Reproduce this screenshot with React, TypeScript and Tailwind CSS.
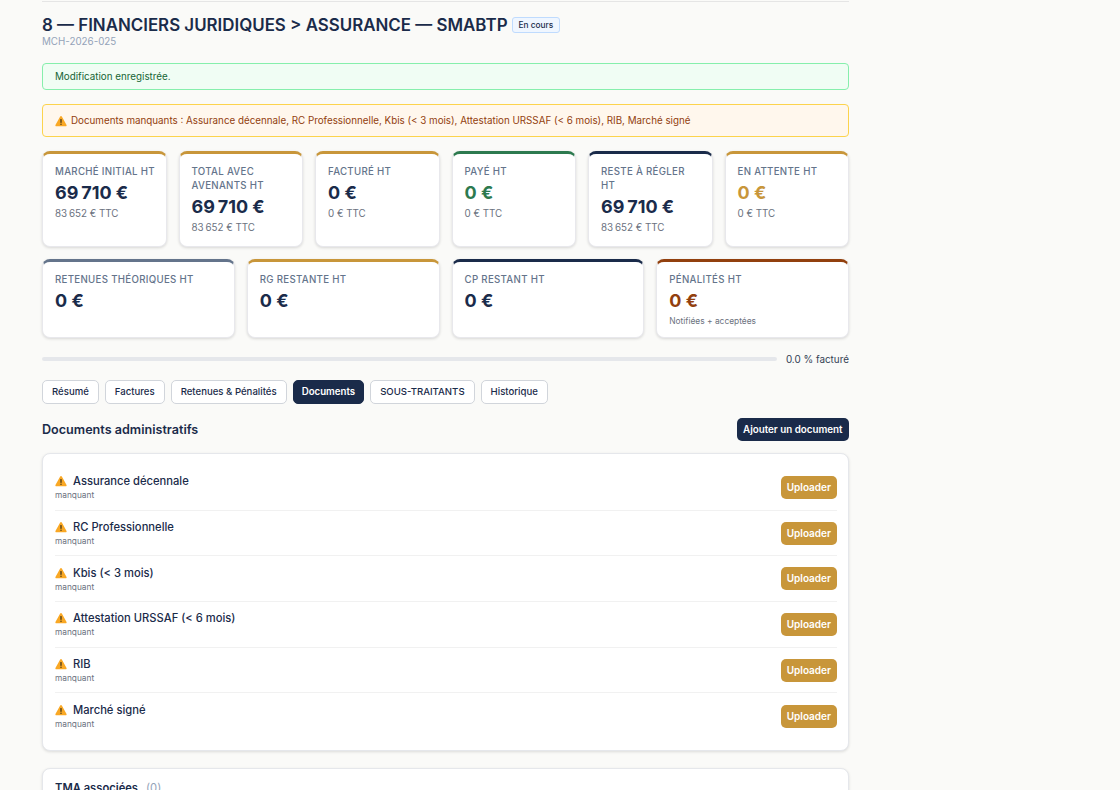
const WarnIcon = ({ size = 12 }: { size?: number }) => (
  <svg width={size} height={size} viewBox="0 0 16 16" className="shrink-0">
    <path d="M8 1.2c.5 0 .9.3 1.1.7l6.3 11.4c.4.8-.1 1.7-1 1.7H1.6c-.9 0-1.4-.9-1-1.7L6.9 1.9c.2-.4.6-.7 1.1-.7z" fill="#f9a825" />
    <rect x="7.1" y="5.2" width="1.8" height="5.4" rx="0.8" fill="#4a3a1a" />
    <circle cx="8" cy="12.4" r="1" fill="#4a3a1a" />
  </svg>
);

interface Kpi {
  label: string;
  value: string;
  sub?: string;
  bar: string;
  color: string;
}

const topKpis: Kpi[] = [
  { label: "Marché initial HT", value: "69\u202f710 €", sub: "83\u202f652 € TTC", bar: "border-t-[#c8963a]", color: "text-[#1a2b4a]" },
  { label: "Total avec avenants HT", value: "69\u202f710 €", sub: "83\u202f652 € TTC", bar: "border-t-[#c8963a]", color: "text-[#1a2b4a]" },
  { label: "Facturé HT", value: "0 €", sub: "0 € TTC", bar: "border-t-[#c8963a]", color: "text-[#1a2b4a]" },
  { label: "Payé HT", value: "0 €", sub: "0 € TTC", bar: "border-t-[#2d7a4f]", color: "text-[#2d7a4f]" },
  { label: "Reste à régler HT", value: "69\u202f710 €", sub: "83\u202f652 € TTC", bar: "border-t-[#1a2b4a]", color: "text-[#1a2b4a]" },
  { label: "En attente HT", value: "0 €", sub: "0 € TTC", bar: "border-t-[#c8963a]", color: "text-[#c8963a]" },
];

const bottomKpis: Kpi[] = [
  { label: "Retenues théoriques HT", value: "0 €", bar: "border-t-[#64748b]", color: "text-[#1a2b4a]" },
  { label: "RG restante HT", value: "0 €", bar: "border-t-[#c8963a]", color: "text-[#1a2b4a]" },
  { label: "CP restant HT", value: "0 €", bar: "border-t-[#1a2b4a]", color: "text-[#1a2b4a]" },
  { label: "Pénalités HT", value: "0 €", sub: "Notifiées + acceptées", bar: "border-t-[#92400e]", color: "text-[#92400e]" },
];

const tabs = ["Résumé", "Factures", "Retenues & Pénalités", "Documents", "SOUS-TRAITANTS", "Historique"];

const docs = [
  "Assurance décennale",
  "RC Professionnelle",
  "Kbis (< 3 mois)",
  "Attestation URSSAF (< 6 mois)",
  "RIB",
  "Marché signé",
];

const KpiCard = ({ kpi, small }: { kpi: Kpi; small?: boolean }) => (
  <div className={`bg-white rounded-lg border border-[#e8e8ec] border-t-[3px] ${kpi.bar} shadow-[0_1px_3px_rgba(0,0,0,0.14)] pl-3 pr-[10px] pt-[11px]`}>
    <div className="text-[9.7px] leading-[14px] uppercase tracking-[0.3px] font-medium text-[#64748b]">{kpi.label}</div>
    <div className={`text-[18px] leading-[21px] mt-[3px] font-bold ${kpi.color}`}>{kpi.value}</div>
    {kpi.sub && (
      <div className={`${small ? "text-[8.4px] mt-[3px]" : "text-[9.8px] mt-[4px]"} leading-[14px] text-[#6b7280]`}>{kpi.sub}</div>
    )}
  </div>
);

export default function App() {
  return (
    <div className="h-[790px] overflow-hidden bg-[#fafaf8] pl-[42px] pr-[271px] font-['Inter',sans-serif] text-[#1a2b4a]">
      <div className="border-t border-[#e5e5e5] mt-px pt-[13px]">
        <div className="flex items-center gap-[4px]">
          <h1 className="text-[16.9px] leading-[20px] font-semibold">8 — FINANCIERS JURIDIQUES &gt; ASSURANCE — SMABTP</h1>
          <span className="text-[8.3px] leading-[12px] font-medium px-[6px] py-[1px] rounded-[3px] bg-[#eff6ff] border border-[#bfdbfe]">En cours</span>
        </div>
        <div className="text-[9.8px] leading-[14px] text-[#94a3b8]">MCH-2026-025</div>

        <div className="mt-[14px] h-[27px] flex items-center px-3 pt-px rounded-[4px] bg-[#f0fdf4] border border-[#86efac] text-[9.8px] text-[#166534]">
          Modification enregistrée.
        </div>

        <div className="mt-[14px] h-[33px] flex items-center gap-[4px] px-3 rounded-[4px] bg-[#fff7ed] border border-[#fcd34d] text-[9.8px] text-[#92400e]">
          <WarnIcon size={12} />
          <span className="pt-[2px]">
            Documents manquants : Assurance décennale, RC Professionnelle, Kbis (&lt; 3 mois), Attestation URSSAF (&lt; 6 mois), RIB, Marché signé
          </span>
        </div>

        <div className="mt-[14px] grid grid-cols-6 gap-3 h-[96px]">
          {topKpis.map((k) => (
            <KpiCard key={k.label} kpi={k} />
          ))}
        </div>

        <div className="mt-3 grid grid-cols-4 gap-3 h-[79px]">
          {bottomKpis.map((k) => (
            <KpiCard key={k.label} kpi={k} small />
          ))}
        </div>

        <div className="mt-[14px] flex items-center gap-[9px] h-[14px]">
          <div className="flex-1 h-1 rounded-full bg-[#e5e7eb]" />
          <span className="text-[9.9px] text-[#334155]">0.0 % facturé</span>
        </div>

        <div className="mt-[14px] flex gap-[6px]">
          {tabs.map((t) =>
            t === "Documents" ? (
              <button key={t} className="h-6 px-[8px] rounded-[5px] bg-[#1a2b4a] border border-[#1a2b4a] text-white text-[9.7px] font-semibold">{t}</button>
            ) : (
              <button key={t} className="h-6 px-[9px] rounded-[5px] bg-white border border-[#d1d5db] text-[9.6px] font-medium text-[#1a2b4a]">{t}</button>
            )
          )}
        </div>

        <div className="mt-[14px] flex items-center justify-between h-[23px]">
          <h2 className="text-[12.6px] font-semibold pt-[2px]">Documents administratifs</h2>
          <button className="h-[23px] px-[6.5px] pt-px rounded-[5px] bg-[#1a2b4a] text-white text-[9.8px] font-semibold">Ajouter un document</button>
        </div>

        <div className="mt-3 bg-white rounded-lg border border-[#e5e7eb] shadow-[0_1px_3px_rgba(0,0,0,0.12)] pl-3 pr-[11px] pt-[11px] pb-[11px]">
          {docs.map((d, i) => (
            <div key={d} className={`flex items-center justify-between h-[45.7px] ${i < docs.length - 1 ? "border-b border-[#f1f1f1]" : ""}`}>
              <div>
                <div className="flex items-center gap-[6px] text-[11.2px] leading-[16px] font-medium">
                  <WarnIcon size={12} />
                  {d}
                </div>
                <div className="text-[8.3px] leading-[12px] text-[#6b7280]">manquant</div>
              </div>
              <button className="h-[23px] px-[6px] rounded-[5px] bg-[#c8963a] text-white text-[10px] font-semibold">Uploader</button>
            </div>
          ))}
        </div>

        <div className="mt-[17px] bg-white rounded-lg border border-[#e5e7eb] shadow-[0_1px_3px_rgba(0,0,0,0.12)] px-3 pt-[11px] pb-3">
          <div className="flex items-baseline gap-2 text-[11.2px] leading-[16px] font-semibold">
            TMA associées
            <span className="font-normal text-[#94a3b8]">(0)</span>
          </div>
        </div>
      </div>
    </div>
  );
}
